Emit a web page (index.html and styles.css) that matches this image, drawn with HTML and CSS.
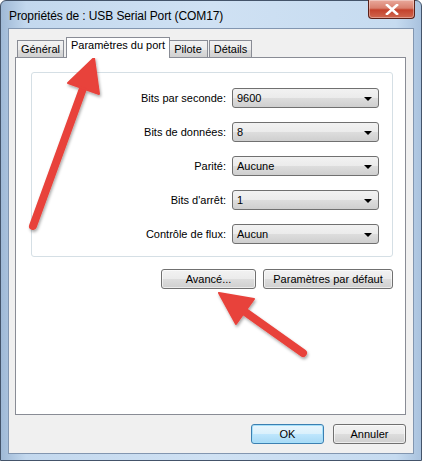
FILE: index.html
```html
<!DOCTYPE html>
<html lang="fr">
<head>
  <meta charset="UTF-8">
  <title>Propriétés de : USB Serial Port (COM17)</title>
  <link rel="stylesheet" href="styles.css">
</head>
<body>
  <div class="window">
    <div class="titlebar">
      <span class="title">Propriétés de : USB Serial Port (COM17)</span>
      <div class="close-btn">
        <svg width="14" height="11" viewBox="0 0 14 11">
          <path d="M2 1 L12 10 M12 1 L2 10" stroke="#fff" stroke-width="2.6" stroke-linecap="square"/>
        </svg>
      </div>
    </div>

    <div class="client">
      <div class="tabstrip">
        <div class="tab tab-general">Général</div>
        <div class="tab tab-port active">Paramètres du port</div>
        <div class="tab tab-pilote">Pilote</div>
        <div class="tab tab-details">Détails</div>
      </div>

      <div class="tabpanel">
        <div class="groupbox">
          <div class="field">
            <label>Bits par seconde:</label>
            <div class="combo"><span>9600</span><i class="caret"></i></div>
          </div>
          <div class="field">
            <label>Bits de données:</label>
            <div class="combo"><span>8</span><i class="caret"></i></div>
          </div>
          <div class="field">
            <label>Parité:</label>
            <div class="combo"><span>Aucune</span><i class="caret"></i></div>
          </div>
          <div class="field">
            <label>Bits d'arrêt:</label>
            <div class="combo"><span>1</span><i class="caret"></i></div>
          </div>
          <div class="field">
            <label>Contrôle de flux:</label>
            <div class="combo"><span>Aucun</span><i class="caret"></i></div>
          </div>
        </div>

        <div class="panel-buttons">
          <button class="btn btn-advanced">Avancé...</button>
          <button class="btn btn-defaults">Paramètres par défaut</button>
        </div>
      </div>

      <div class="dialog-buttons">
        <button class="btn btn-dialog default">OK</button>
        <button class="btn btn-dialog">Annuler</button>
      </div>
    </div>

    <!-- annotation arrows drawn on top of the dialog -->
    <svg class="arrows" width="422" height="461" viewBox="0 0 422 461">
      <defs>
        <filter id="shadow" x="-20%" y="-20%" width="140%" height="140%">
          <feDropShadow dx="1" dy="2" stdDeviation="1.6" flood-color="#000" flood-opacity="0.35"/>
        </filter>
      </defs>
      <g fill="#e8423b" stroke="#e8423b" filter="url(#shadow)">
        <line x1="32" y1="225" x2="84" y2="82" stroke-width="8" stroke-linecap="round"/>
        <polygon points="93,57 98,93 67,82" stroke-width="2" stroke-linejoin="round"/>
        <line x1="302" y1="352" x2="240" y2="308" stroke-width="8" stroke-linecap="round"/>
        <polygon points="218,292 253,298 235,323" stroke-width="2" stroke-linejoin="round"/>
      </g>
    </svg>
  </div>
</body>
</html>
```

FILE: styles.css
```css
/* Base */
* {
  box-sizing: border-box;
}

body {
  margin: 0;
  font-family: 'Liberation Sans', Arial, sans-serif;
  font-size: 11px;
  color: #000;
  background: #fff;
}

/* Window frame */
.window {
  position: relative;
  width: 422px;
  height: 461px;
  padding: 0 7px 7px 7px;
  background: linear-gradient(to right, #9fb9d6 0%, #c3d8ee 6%, #cfe1f3 50%, #c6dbf0 94%, #a9c2de 100%);
  border: 1px solid #44546a;
  border-radius: 6px 6px 0 0;
}

.titlebar {
  display: flex;
  justify-content: space-between;
  height: 27px;
}

.title {
  padding: 8px 0 0 1px;
  font-size: 12px;
  letter-spacing: -0.1px;
}

.close-btn {
  display: flex;
  align-items: center;
  justify-content: center;
  width: 47px;
  height: 19px;
  margin-top: -1px;
  margin-right: -1px;
  border: 1px solid #5a2018;
  border-top: none;
  border-radius: 0 0 4px 4px;
  background: linear-gradient(to bottom, #e9a99c 0%, #d9806e 45%, #c4422c 55%, #d0674f 100%);
  box-shadow: inset 0 0 0 1px rgba(255, 255, 255, 0.35);
}

/* Client area */
.client {
  height: 426px;
  background: #f0f0f0;
  border: 1px solid #8296b0;
  padding: 8px 7px 0 6px;
}

/* Tabs */
.tabstrip {
  display: flex;
  align-items: flex-end;
  height: 20px;
  padding-left: 2px;
}

.tab {
  height: 18px;
  margin-bottom: -1px;
  padding-top: 2px;
  text-align: center;
  border: 1px solid #898c95;
  border-bottom: none;
  background: linear-gradient(to bottom, #f2f2f2 0%, #ebebeb 50%, #dddddd 51%, #cfcfcf 100%);
}

.tab + .tab {
  margin-left: -1px;
}

.tab-general { width: 47px; }
.tab-pilote { width: 40px; }
.tab-details { width: 43px; margin-left: 1px !important; }

.tab.active {
  position: relative;
  z-index: 1;
  width: 104px;
  height: 21px;
  margin-left: 2px;
  margin-right: -1px;
  padding-top: 1px;
  background: #fff;
}

.tabpanel {
  position: relative;
  height: 358px;
  background: #fff;
  border: 1px solid #898c95;
  padding: 14px 12px 0 15px;
}

/* Group box */
.groupbox {
  height: 185px;
  border: 1px solid #d5dfe5;
  border-radius: 3px;
  padding: 15px 13px 0 0;
  display: flex;
  flex-direction: column;
  gap: 14px;
}

.field {
  display: flex;
  justify-content: flex-end;
  align-items: center;
  gap: 6px;
  height: 20px;
}

.combo {
  display: flex;
  align-items: center;
  justify-content: space-between;
  width: 147px;
  height: 20px;
  padding: 0 6px 0 4px;
  border: 1px solid #707070;
  border-radius: 3px;
  background: linear-gradient(to bottom, #f2f2f2 0%, #ebebeb 50%, #dddddd 51%, #cfcfcf 100%);
}

.caret {
  width: 0;
  height: 0;
  border-left: 4px solid transparent;
  border-right: 4px solid transparent;
  border-top: 4px solid #000;
  margin-top: 1px;
}

/* Buttons */
.btn {
  height: 20px;
  padding: 0;
  font-family: inherit;
  font-size: 11px;
  color: #000;
  border: 1px solid #707070;
  border-radius: 3px;
  background: linear-gradient(to bottom, #f2f2f2 0%, #ebebeb 50%, #dddddd 51%, #cfcfcf 100%);
  box-shadow: inset 0 0 0 1px rgba(255, 255, 255, 0.6);
}

.panel-buttons {
  display: flex;
  justify-content: flex-end;
  gap: 7px;
  margin-top: 12px;
}

.btn-advanced { width: 95px; }
.btn-defaults { width: 130px; }

.dialog-buttons {
  display: flex;
  justify-content: flex-end;
  gap: 9px;
  margin-top: 9px;
}

.btn-dialog {
  width: 73px;
}

.btn-dialog.default {
  border-color: #3c7fb1;
  background: linear-gradient(to bottom, #eaf6fd 0%, #d9f0fc 50%, #bee6fd 51%, #a7d9f5 100%);
  box-shadow: inset 0 0 0 1px #a6e0fa;
}

/* Annotation overlay */
.arrows {
  position: absolute;
  top: 0;
  left: 0;
  pointer-events: none;
}
```
